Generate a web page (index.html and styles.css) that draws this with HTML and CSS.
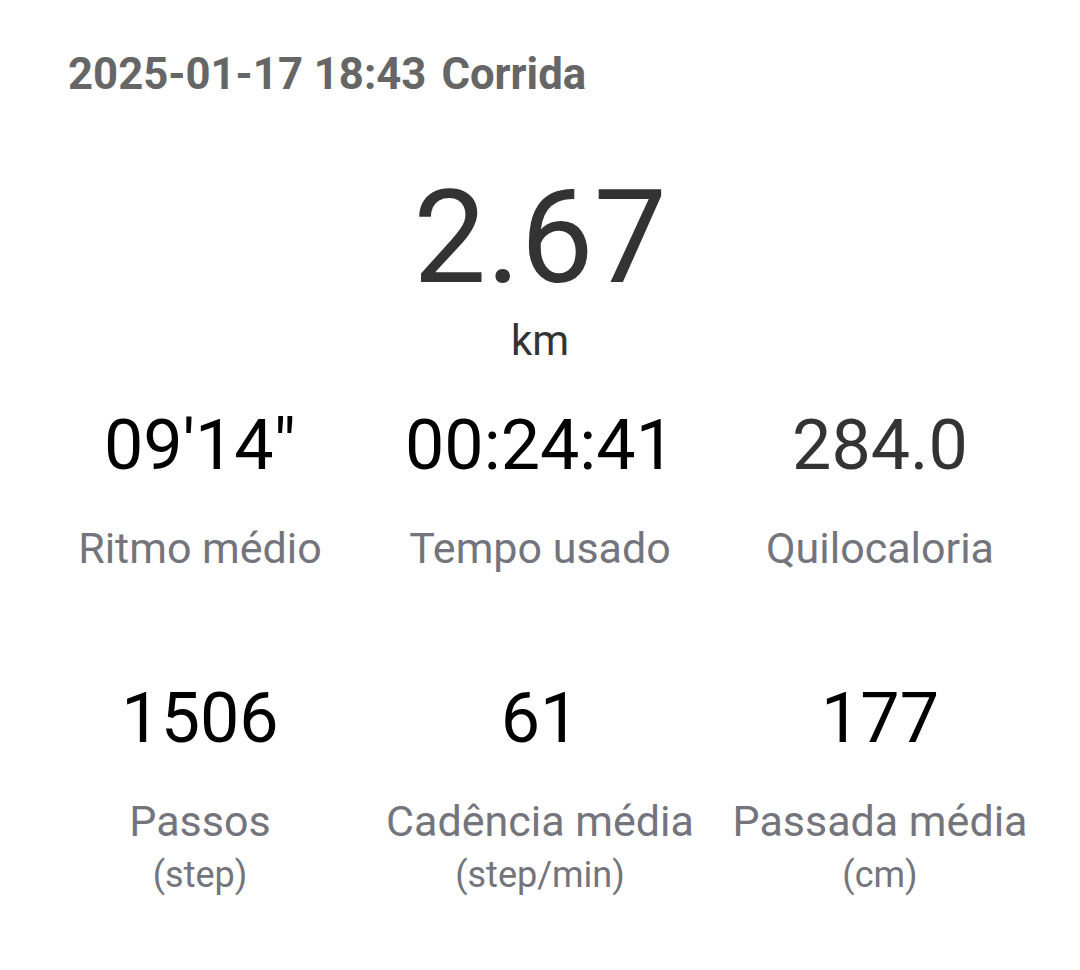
FILE: index.html
```html
<!DOCTYPE html>
<html lang="pt">
<head>
<meta charset="utf-8">
<title>Corrida</title>
<link rel="stylesheet" href="styles.css">
</head>
<body>
<div class="page">
  <div class="header"><span>2025-01-17 18:43</span><span class="type">Corrida</span></div>
  <div class="distance">
    <div class="dist-value">2.67</div>
    <div class="dist-unit">km</div>
  </div>
  <div class="stats">
    <div class="stat">
      <div class="value black">09'14"</div>
      <div class="label">Ritmo médio</div>
    </div>
    <div class="stat">
      <div class="value black">00:24:41</div>
      <div class="label">Tempo usado</div>
    </div>
    <div class="stat">
      <div class="value dark">284.0</div>
      <div class="label">Quilocaloria</div>
    </div>
    <div class="stat">
      <div class="value black">1506</div>
      <div class="label">Passos</div>
      <div class="sub">(step)</div>
    </div>
    <div class="stat">
      <div class="value black">61</div>
      <div class="label">Cadência média</div>
      <div class="sub">(step/min)</div>
    </div>
    <div class="stat">
      <div class="value black">177</div>
      <div class="label">Passada média</div>
      <div class="sub">(cm)</div>
    </div>
  </div>
</div>
</body>
</html>
```
FILE: styles.css
```css
html, body {
  margin: 0;
  padding: 0;
  background: #ffffff;
}
body {
  font-family: Roboto, "Liberation Sans", sans-serif;
}
.page {
  width: 1080px;
  height: 970px;
  box-sizing: border-box;
  padding: 52px 30px 0 30px;
}
.header {
  font-size: 43.7px;
  line-height: 44px;
  font-weight: 700;
  color: #666666;
  padding-left: 38px;
  display: flex;
}
.header .type {
  margin-left: 15px;
}
.distance {
  display: flex;
  flex-direction: column;
  align-items: center;
  margin-top: 77px;
  color: #333333;
}
.dist-value {
  font-size: 130px;
  line-height: 130px;
}
.dist-unit {
  font-size: 42px;
  line-height: 42px;
  margin-top: 17px;
}
.stats {
  display: grid;
  grid-template-columns: repeat(3, 1fr);
  row-gap: 114px;
  margin-top: 48px;
}
.stat {
  display: flex;
  flex-direction: column;
  align-items: center;
  text-align: center;
  white-space: nowrap;
}
.value {
  font-size: 70px;
  line-height: 70px;
}
.value.black { color: #000000; }
.value.dark { color: #333333; }
.label {
  font-size: 43px;
  line-height: 42px;
  color: #74747c;
  margin-top: 47px;
}
.sub {
  font-size: 36px;
  line-height: 36px;
  color: #74747c;
  margin-top: 15px;
}
```
